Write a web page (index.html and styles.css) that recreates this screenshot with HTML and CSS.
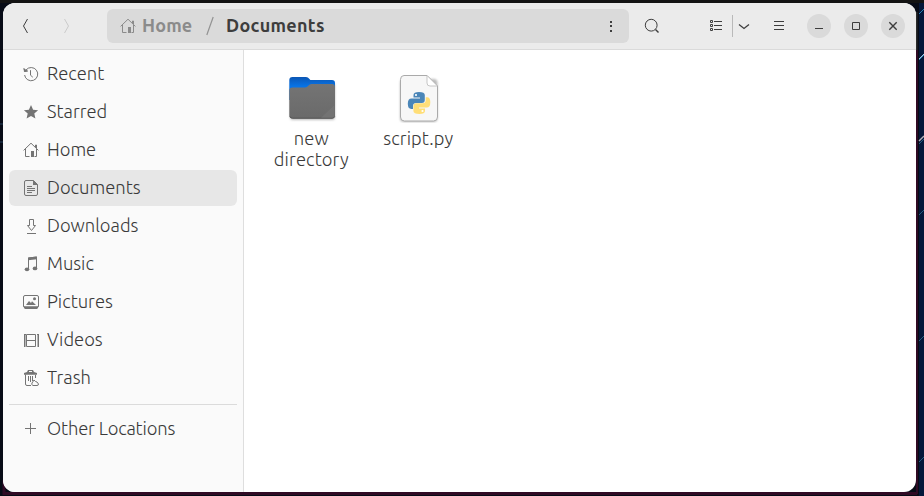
FILE: index.html
```html
<!DOCTYPE html>
<html lang="en">
<head>
<meta charset="utf-8">
<title>Documents</title>
<link rel="stylesheet" href="styles.css">
</head>
<body>
<svg class="wallpaper" width="924" height="496" aria-hidden="true">
  <rect width="924" height="496" fill="#070b16"/>
  <rect x="919" width="5" height="496" fill="#04173a"/>
  <rect width="924" height="3" fill="#131313"/>
  <path d="M916 12v38" stroke="#2b2b2b" stroke-width="3"/>
  <path d="M917 50v444" stroke="#300a24" stroke-width="2"/>
  <path d="M4 480v13.500h913" fill="none" stroke="#300a24" stroke-width="3"/>
  <path d="M919 14l5-5M919 60l5-5" stroke="#2a83b5"/>
  <path d="M919 141l5-5" stroke="#b4b4bc" stroke-width="1.500"/>
  <path d="M919 59l5-5" stroke="#a5c4dc"/>
  <path d="M919 144l5-5M919 215l5-5M919 462l5-5M919 341l5-5" stroke="#285d80"/>
  <path d="M0 124h3M0 142h3" stroke="#26405a"/>
</svg>
<div class="window">
  <header class="headerbar">
    <button class="nav back"><svg width="16" height="16" viewBox="0 0 16 16"><path d="M10.500 1L6.500 8l4 7"/></svg></button>
    <button class="nav forward"><svg width="16" height="16" viewBox="0 0 16 16"><path d="M6.500 1l4 7-4 7"/></svg></button>
    <div class="pathbar">
      <svg class="path-icon" width="16" height="16" viewBox="0 0 16 16"><path d="M.6 8.400L8 1.200l7.400 7.200M2.500 7v7.500h4M13.500 7v7.500h-2M12.500 5V3h1v3"/><path class="solid" d="M8 9h3v6H8z"/></svg>
      <span class="crumb parent">Home</span>
      <svg class="slash" width="8" height="20" viewBox="0 0 8 20"><path d="M.8 19L7.200 1"/></svg>
      <span class="crumb current">Documents</span>
      <svg class="dots" width="16" height="16" viewBox="0 0 16 16"><path class="solid" d="M7 3h2v2H7zM7 7h2v2H7zM7 12h2v2H7z"/></svg>
    </div>
    <button class="search"><svg width="16" height="16" viewBox="0 0 16 16"><circle cx="7.200" cy="7.200" r="5.900"/><path d="M11.500 11.500l3 3" stroke-width="1.400"/></svg></button>
    <button class="list"><svg width="14" height="12" viewBox="0 0 14 12"><path d="M1.500.5h2v2h-2zM1.500 4.500h2v2h-2zM1.500 8.500h2v2h-2z"/><path d="M5 1.500h8M5 5.500h8M5 9.500h8"/></svg></button>
    <span class="divider"></span>
    <button class="chevron"><svg width="12" height="8" viewBox="0 0 12 8"><path d="M1 2.500l5 4 5-4" stroke-width="1.300"/></svg></button>
    <button class="menu"><svg width="10" height="10" viewBox="0 0 10 10"><path d="M0 .5h10M0 4.500h10M0 8.500h10"/></svg></button>
    <div class="controls">
      <button><svg width="10" height="10" viewBox="0 0 10 10"><path d="M1 7.500h8"/></svg></button>
      <button><svg width="10" height="10" viewBox="0 0 10 10"><path d="M1.500 1.500h7v7h-7z"/></svg></button>
      <button><svg width="10" height="10" viewBox="0 0 10 10"><path d="M1.300 1.300l7.400 7.400M8.700 1.300L1.300 8.700" stroke-width="1.400"/></svg></button>
    </div>
  </header>
  <main class="body">
    <nav class="sidebar">
      <a class="place"><svg width="16" height="16" viewBox="0 0 16 16"><path d="M1.600 9A6.600 6.600 0 1 0 3 4M1 2.500l.8 3 3-.4M7.500 4.200v5l2.300 2"/><path class="solid" d="M.5 2l4.500 3-4 1z"/></svg><span>Recent</span></a>
      <a class="place"><svg width="16" height="16" viewBox="0 0 16 16"><path class="solid" d="M8 1l2.100 4.700 5 .5-3.800 3.400 1.100 4.900L8 12l-4.400 2.500 1.100-4.900L.9 6.200l5-.5z"/></svg><span>Starred</span></a>
      <a class="place"><svg width="16" height="16" viewBox="0 0 16 16"><path d="M.6 8.400L8 1.200l7.400 7.200M2.500 7v7.500h4M13.500 7v7.500h-2M12.500 5V3h1v3"/><path class="solid" d="M8 9h3v6H8z"/></svg><span>Home</span></a>
      <a class="place selected"><svg width="16" height="16" viewBox="0 0 16 16"><path d="M3 .5h7.500l4 4V14q0 1.500-1.500 1.500H3Q1.500 15.500 1.500 14V2Q1.500.5 3 .5zM4 6.500h5M4 8.500h8M4 10.500h8M4 12.500h5"/><path class="solid" d="M10 0v5h5z"/></svg><span>Documents</span></a>
      <a class="place"><svg width="16" height="16" viewBox="0 0 16 16"><path d="M6.500 1.500h4v6h2l-4 5-4-5h2zM4 15.500h9"/></svg><span>Downloads</span></a>
      <a class="place"><svg width="16" height="16" viewBox="0 0 16 16"><path d="M5.500 13V2l8-1v11.500"/><path class="solid" d="M5 1.500L14 .5v2.700l-9 1z"/><ellipse class="solid" cx="4" cy="13.300" rx="2.300" ry="1.900"/><ellipse class="solid" cx="12" cy="12.400" rx="2.300" ry="1.900"/></svg><span>Music</span></a>
      <a class="place"><svg width="16" height="16" viewBox="0 0 16 16"><rect x=".5" y="1.500" width="15" height="12" rx="1.500"/><path class="solid" d="M1 12.300h14V14l-1 1H2l-1-1zM3 11l3-4 2 2 1-1.800L13 11z"/><circle class="solid" cx="11.500" cy="4.800" r="1.500"/></svg><span>Pictures</span></a>
      <a class="place"><svg width="16" height="16" viewBox="0 0 16 16"><path d="M3.500 2.500h9v12h-9zM3.500 8.500h9"/><path d="M2 2v13M15 2v13" stroke-width="2"/><path class="gap" d="M2.500 3.500v11M14.500 3.500v11"/></svg><span>Videos</span></a>
      <a class="place"><svg width="16" height="16" viewBox="0 0 16 16"><path class="solid" d="M1 3l3-1 1-2h5l1 2 3 1v1.700H1z"/><path class="knock" d="M6 1.500h3"/><path d="M2.500 4.500V14q0 1.500 1.500 1.500h4M5.500 6v5M7.500 6v6M9.500 6v5M12.500 5v3"/><path d="M10 15.500q-2-.8-1-2.500l2-3 1.500 1.500L14 12l1.500 2q0 1.500-1.500 1.500z"/></svg><span>Trash</span></a>
      <hr class="rule">
      <a class="place"><svg width="16" height="16" viewBox="0 0 16 16"><path d="M2 7.500h11M7.500 2v11"/></svg><span class="tight">Other Locations</span></a>
    </nav>
    <section class="files">
      <figure class="file">
        <svg width="64" height="48" viewBox="0 0 64 48">
          <defs><linearGradient id="blue" x2="0" y2="1"><stop stop-color="#0b56b4"/><stop offset=".4" stop-color="#0873e5"/></linearGradient><linearGradient id="gray" x2="0" y2="1"><stop stop-color="#747474"/><stop offset="1" stop-color="#6a6a6a"/></linearGradient></defs>
          <rect class="shade" x="10" y="8" width="45" height="37" rx="3"/>
          <path fill="url(#blue)" d="M12.500 2H26q2 0 3.500 2l.8.900H52q3 0 3 3V25H9.300V5q0-3 3.200-3z"/>
          <path fill="url(#gray)" d="M12.500 12.500H25q2 0 3.500-2 1-1.500 3-1.500H52q3 0 3 3v28.500q0 3-3 3H12.500q-3.200 0-3.200-3v-25q0-3 3.200-3z"/>
          <path d="M10 41.500q.5 1.700 2.500 1.700H52q2 0 2.700-1.700" fill="none" stroke="#555"/>
          <path d="M54.500 30L41 42.800h11q2.500 0 2.500-2.300z" fill="#7a7a7a" opacity=".55"/>
        </svg>
        <figcaption>new<br>directory</figcaption>
      </figure>
      <figure class="file">
        <svg width="64" height="48" viewBox="0 0 64 48">
          <rect class="shade" x="13" y="4" width="37.500" height="43" rx="4"/>
          <path fill="#f7f7f7" stroke="#aaa" d="M17 .5h23L50.500 11v31q0 4-4 4H17.500q-4 0-4-4V4.500q0-4 3.500-4z"/>
          <path d="M40 .5V8q0 3 3 3h7.500z" fill="#fff" stroke="#b9b9b9" stroke-width=".8"/>
          <path fill="#4b86b8" d="M32 17q-5.500 0-5.500 3v2.500H33v1h-8.500q-3.700 0-3.700 5.200t3.500 5.200H26v-3q0-3 3.300-3h5.500q3 0 3-3V20q0-3-5.800-3z"/>
          <path fill="#ffde77" d="M32.500 39q5.500 0 5.500-3v-2.500h-6v-1h7.800q3.500 0 3.500-5.200T40 22.200h-1.300v3q0 3-3.300 3h-6q-3 0-3 3V36q0 3 6.100 3z"/>
          <circle cx="29" cy="20" r="1.100" fill="#fff"/><circle cx="35.500" cy="36" r="1.100" fill="#fff"/>
        </svg>
        <figcaption>script.py</figcaption>
      </figure>
    </section>
  </main>
</div>
</body>
</html>
```
FILE: styles.css
```css
* { box-sizing: border-box; }
body { margin: 0; width: 924px; height: 496px; overflow: hidden; padding: 3px 8px 4px 3px; font-family: "Ubuntu", "Noto Sans", sans-serif; font-size: 18.4px; font-weight: 330; color: #3a3a3a; }
.wallpaper { position: absolute; left: 0; top: 0; z-index: -1; }
svg { flex: none; display: block; fill: none; stroke: currentColor; stroke-width: 1; }
.wallpaper rect, .file svg { stroke: none; }
.solid { fill: currentColor; stroke: none; }
button { border: 0; padding: 0; background: none; color: inherit; display: flex; align-items: center; justify-content: center; }
.window { width: 913px; height: 489px; border-radius: 12px; overflow: hidden; background: #fff; display: flex; flex-direction: column; }
.headerbar { height: 47px; flex: none; display: flex; align-items: center; background: #ebebeb; border-bottom: 1px solid #dadada; padding: 0 11px 0 14px; color: #3d3d3d; }
.nav { width: 16px; }
.forward { margin-left: 25px; color: #cbcbcb; }
.pathbar { width: 522px; height: 34px; margin-left: 33px; border-radius: 6px; background: #dadada; display: flex; align-items: center; padding: 0 10px 0 13px; }
.path-icon { color: #8b8b8b; }
.crumb { font-weight: 700; font-size: 18px; letter-spacing: .3px; line-height: 32px; padding-bottom: 2px; }
.parent { color: #8b8b8b; margin-left: 6px; width: 64px; letter-spacing: .15px; }
.slash { color: #929292; stroke-width: 1.200; }
.current { margin-left: 12px; }
.dots { margin-left: auto; }
.search { margin-left: 15px; }
.list { margin-left: 49px; }
.divider { width: 1px; height: 22px; background: #b9b9b9; margin-left: 9px; }
.chevron { margin-left: 5px; }
.menu { margin-left: 24px; }
.controls { display: flex; gap: 13px; margin-left: auto; }
.controls button { width: 24px; height: 24px; border-radius: 50%; background: #dadada; }
.body { flex: 1; display: flex; min-height: 0; }
.sidebar { width: 241px; background: #fafafa; border-right: 1px solid #dedede; padding: 6px; display: flex; flex-direction: column; gap: 2px; }
.place { height: 36px; flex: none; border-radius: 6px; display: flex; align-items: center; gap: 8px; padding-left: 14px; white-space: nowrap; }
.place span { padding-bottom: 2px; }
.place .tight { letter-spacing: -.18px; }
.place svg { color: #747474; }
.place .gap { stroke: #fafafa; stroke-dasharray: 1 1; stroke-width: 1; }
.place .knock { stroke: #fafafa; }
.selected { background: #e7e7e7; }
.rule { height: 1px; width: 100%; flex: none; border: 0; background: #dbdbdb; margin: 6px 0 4px; }
.files { padding: 25px 0 0 22px; display: flex; gap: 15px; align-items: flex-start; }
.file { margin: 0; width: 92px; display: flex; flex-direction: column; align-items: center; }
.file figcaption { margin-top: 5px; padding-right: 1.500px; line-height: 21px; text-align: center; letter-spacing: .1px; }
.shade { fill: #bbb; filter: blur(1px); }
```
